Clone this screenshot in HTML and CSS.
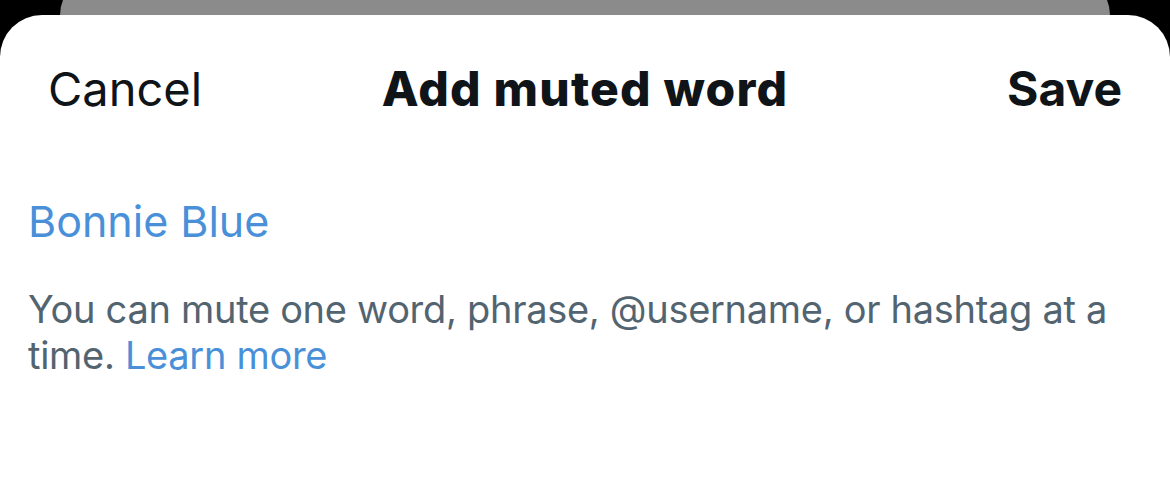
FILE: index.html
```html
<!DOCTYPE html>
<html lang="en">
<head>
    <meta charset="UTF-8">
    <meta name="viewport" content="width=device-width, initial-scale=1.0">
    <title>Add muted word</title>
    <link rel="stylesheet" href="styles.css">
</head>
<body>
    <div class="back-card"></div>

    <div class="sheet">
        <div class="sheet-header">
            <button class="header-button cancel">Cancel</button>
            <h1>Add muted word</h1>
            <button class="header-button save">Save</button>
        </div>

        <div class="sheet-body">
            <div class="word-input">Bonnie Blue</div>
            <p class="hint">
                You can mute one word, phrase, @username, or hashtag at a time.
                <a href="#" class="learn-more">Learn more</a>
            </p>
        </div>
    </div>
</body>
</html>
```

FILE: styles.css
```css
* {
    margin: 0;
    padding: 0;
    box-sizing: border-box;
}

html, body {
    height: 100%;
}

body {
    font-family: Inter, "Noto Sans", sans-serif;
    background: #000;
    display: flex;
    flex-direction: column;
    overflow: hidden;
}

.back-card {
    flex: none;
    height: 39px;
    margin: -24px 60px 0;
    background: #8b8b8b;
    border-radius: 39px 39px 0 0;
}

.sheet {
    flex: 1;
    background: #fff;
    border-radius: 42px 42px 0 0;
}

.sheet-header {
    display: grid;
    grid-template-columns: 1fr auto 1fr;
    align-items: center;
    padding: 45px 48px 0 48px;
}

.header-button {
    background: none;
    border: none;
    font-family: inherit;
    line-height: 58px;
    color: #0f1419;
    cursor: pointer;
}

.cancel {
    justify-self: start;
    font-size: 47px;
    font-weight: 400;
}

.save {
    justify-self: end;
    font-size: 48px;
    font-weight: 700;
}

h1 {
    font-size: 48px;
    line-height: 58px;
    font-weight: 800;
    letter-spacing: 1.2px;
    color: #0f1419;
}

.sheet-body {
    padding: 77px 40px 0 28px;
}

.word-input {
    font-size: 43px;
    line-height: 52px;
    color: #4a90d9;
}

.hint {
    margin-top: 39px;
    font-size: 38px;
    line-height: 46px;
    letter-spacing: -0.3px;
    color: #536471;
}

.learn-more {
    color: #4a90d9;
    text-decoration: none;
}
```
